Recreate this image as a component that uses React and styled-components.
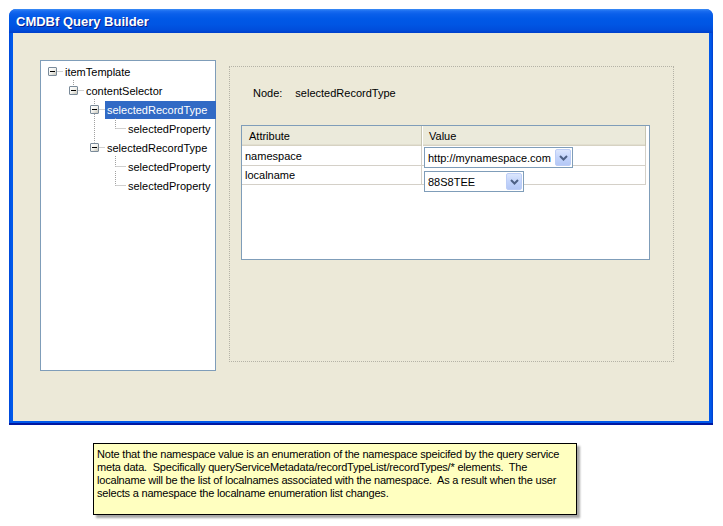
import React from "react";
import styled, { createGlobalStyle } from "styled-components";

const GlobalStyle = createGlobalStyle`
  html, body { margin: 0; padding: 0; background: #ffffff; }
  body { font-family: "Liberation Sans", Arial, sans-serif; font-size: 11px; color: #000; }
`;

const Page = styled.div`
  width: 723px;
  height: 526px;
  padding: 9px 0 0 9px;
  box-sizing: border-box;
`;

const Window = styled.div`
  width: 704px;
  height: 416px;
  display: flex;
  flex-direction: column;
  border-radius: 7px 7px 0 0;
  background: #0054e3;
  box-sizing: border-box;
  overflow: hidden;
`;

const TitleBar = styled.div`
  height: 24px;
  flex: none;
  display: flex;
  align-items: center;
  padding-left: 7px;
  background: linear-gradient(
    to bottom,
    #3d8df5 0px,
    #1a6cf0 2px,
    #0a5fea 5px,
    #0058e6 10px,
    #0055e3 16px,
    #004ddb 21px,
    #003fcb 24px
  );
  color: #fff;
  font-family: "Liberation Sans", Arial, sans-serif;
  font-weight: bold;
  font-size: 13px;
  text-shadow: 1px 1px 0 #0a1e8c;
`;

const Frame = styled.div`
  flex: 1;
  display: flex;
  padding: 0 4px 4px 4px;
  background: linear-gradient(to right, #0048d8, #0058ea 2px, #0058ea calc(100% - 2px), #003ccb);
  box-shadow: inset 0 -2px 0 #0018a0;
`;

const Body = styled.div`
  flex: 1;
  background: #ece9d8;
  display: flex;
  align-items: flex-start;
  padding: 27px 0 0 27px;
  gap: 13px;
`;

const TreePanel = styled.div`
  position: relative;
  width: 176px;
  height: 311px;
  box-sizing: border-box;
  background: #fff;
  border: 1px solid #7f9db9;
  padding-top: 1px;
`;

const Connectors = styled.svg`
  position: absolute;
  left: 0;
  top: 0;
  pointer-events: none;
`;

const TreeRow = styled.div`
  height: 19px;
  display: flex;
  align-items: center;
  padding-left: ${(p) => 22 + p.$level * 21}px;
  box-sizing: border-box;
`;

const Label = styled.span`
  display: inline-flex;
  align-items: center;
  height: 18px;
  padding: ${(p) => (p.$selected ? "0 9px 0 2px" : "0 2px")};
  white-space: nowrap;
  font-size: 11px;
  color: ${(p) => (p.$selected ? "#fff" : "#000")};
  background: ${(p) => (p.$selected ? "#316ac5" : "transparent")};
`;

const Expander = styled.div`
  position: absolute;
  width: 9px;
  height: 9px;
  box-sizing: border-box;
  border: 1px solid #7a8a99;
  border-radius: 1px;
  background: linear-gradient(135deg, #ffffff 0%, #f2f2ee 50%, #c8c5b8 100%);
  &::after {
    content: "";
    position: absolute;
    left: 1px;
    top: 3px;
    width: 5px;
    height: 1px;
    background: #000;
  }
`;

const ContentArea = styled.div`
  margin-top: 6px;
  width: 445px;
  height: 296px;
  box-sizing: border-box;
  border: 1px dotted #b4b2a6;
  padding: 15px 0 0 11px;
  display: flex;
  flex-direction: column;
`;

const NodeLine = styled.div`
  display: flex;
  gap: 13px;
  padding-left: 12px;
  height: 22px;
  align-items: center;
`;

const Table = styled.div`
  margin-top: 21px;
  width: 409px;
  height: 135px;
  box-sizing: border-box;
  border: 1px solid #7f9db9;
  background: #fff;
  padding-right: 3px;
`;

const HeaderRow = styled.div`
  display: grid;
  grid-template-columns: 180px 224px;
  height: 20px;
  background: #ebeadb;
  box-shadow: inset 0 -1px 0 #d6d2c2, inset 0 -2px 0 #e2dfd0;
`;

const HeaderCell = styled.div`
  display: flex;
  align-items: center;
  padding-left: ${(p) => p.$pad}px;
  border-right: 1px solid #c7c5b2;
  border-left: ${(p) => (p.$first ? "none" : "1px solid #fff")};
  box-sizing: border-box;
`;

const DataRow = styled.div`
  display: grid;
  grid-template-columns: 180px 224px;
  height: ${(p) => p.$h}px;
  box-sizing: border-box;
  border-bottom: 1px solid #d4d0c8;
`;

const Cell = styled.div`
  position: relative;
  display: flex;
  align-items: center;
  padding-left: 3px;
  border-right: 1px solid #d4d0c8;
  box-sizing: border-box;
`;

const Combo = styled.div`
  position: absolute;
  left: 2px;
  top: ${(p) => p.$top}px;
  width: ${(p) => p.$w}px;
  height: 21px;
  box-sizing: border-box;
  border: 1px solid #7f9db9;
  background: #fff;
  display: flex;
  align-items: center;
  justify-content: space-between;
  padding: 1px 1px 1px 3px;
  z-index: 1;
`;

const ComboText = styled.span`
  font-size: 11px;
  white-space: nowrap;
`;

const ComboButton = styled.div`
  width: 16px;
  height: 17px;
  border-radius: 2px;
  background: linear-gradient(to bottom, #dce7fd, #c3d4fb 50%, #b4c8f6);
  border: 1px solid #bccdf6;
  box-sizing: border-box;
  display: flex;
  align-items: center;
  justify-content: center;
`;

const Note = styled.div`
  margin: 18px 0 0 84px;
  width: 484px;
  height: 72px;
  box-sizing: border-box;
  background: #ffffc0;
  border: 1px solid #000;
  box-shadow: 3px 3px 2px rgba(0, 0, 0, 0.35);
  padding: 4px 3px 0 3px;
  font-size: 11px;
  line-height: 13px;
  letter-spacing: -0.2px;
`;

const NoteLine = styled.div`
  white-space: pre;
`;

const treeRows = [
  { label: "itemTemplate", level: 0, exp: true },
  { label: "contentSelector", level: 1, exp: true },
  { label: "selectedRecordType", level: 2, exp: true, selected: true },
  { label: "selectedProperty", level: 3 },
  { label: "selectedRecordType", level: 2, exp: true },
  { label: "selectedProperty", level: 3 },
  { label: "selectedProperty", level: 3 },
];

const noteLines = [
  "Note that the namespace value is an enumeration of the namespace speicifed by the query service",
  "meta data.  Specifically queryServiceMetadata/recordTypeList/recordTypes/* elements.  The",
  "localname will be the list of localnames associated with the namespace.  As a result when the user",
  "selects a namespace the localname enumeration list changes.",
];

const ROW_H = 19;
const TOP = 1;
const cy = (i) => TOP + i * ROW_H + 9.5;
const cx = (level) => 11 + level * 21;

function TreeLines() {
  const lines = [];
  const dot = { stroke: "#a0a0a0", strokeWidth: 1, strokeDasharray: "1 1" };
  treeRows.forEach((r, i) => {
    const x = cx(r.level) + 0.5;
    const y = Math.floor(cy(i)) + 0.5;
    const textX = 22 + r.level * 21;
    lines.push(
      <line key={"h" + i} x1={r.exp ? x + 5 : x} y1={y} x2={textX} y2={y} {...dot} />
    );
    if (i > 0) {
      let j = i - 1;
      while (j >= 0 && treeRows[j].level > r.level) j--;
      const startY =
        treeRows[j].level === r.level
          ? Math.floor(cy(j)) + 5
          : TOP + (j + 1) * ROW_H - 1;
      const endY = r.exp ? y - 5 : y;
      lines.push(
        <line key={"v" + i} x1={x} y1={startY} x2={x} y2={endY} {...dot} />
      );
    }
  });
  return (
    <Connectors width="174" height="309">
      {lines}
    </Connectors>
  );
}

function Chevron() {
  return (
    <svg width="9" height="6" viewBox="0 0 9 6">
      <path d="M1 1 L4.5 4.5 L8 1" fill="none" stroke="#4d6185" strokeWidth="2" />
    </svg>
  );
}

export default function App() {
  return (
    <>
      <GlobalStyle />
      <Page>
        <Window>
          <TitleBar>CMDBf Query Builder</TitleBar>
          <Frame>
            <Body>
              <TreePanel>
                <TreeLines />
                {treeRows.map((r, i) => (
                  <TreeRow key={i} $level={r.level}>
                    <Label $selected={r.selected}>{r.label}</Label>
                  </TreeRow>
                ))}
                {treeRows.map((r, i) =>
                  r.exp ? (
                    <Expander
                      key={"e" + i}
                      style={{ left: cx(r.level) - 4, top: Math.floor(cy(i)) - 4 }}
                    />
                  ) : null
                )}
              </TreePanel>
              <ContentArea>
                <NodeLine>
                  <span>Node:</span>
                  <span>selectedRecordType</span>
                </NodeLine>
                <Table>
                  <HeaderRow>
                    <HeaderCell $pad={7} $first>Attribute</HeaderCell>
                    <HeaderCell $pad={6}>Value</HeaderCell>
                  </HeaderRow>
                  <DataRow $h={20}>
                    <Cell>namespace</Cell>
                    <Cell>
                      <Combo $top={1} $w={149}>
                        <ComboText>http://mynamespace.com</ComboText>
                        <ComboButton>
                          <Chevron />
                        </ComboButton>
                      </Combo>
                    </Cell>
                  </DataRow>
                  <DataRow $h={19}>
                    <Cell>localname</Cell>
                    <Cell>
                      <Combo $top={5} $w={100}>
                        <ComboText>88S8TEE</ComboText>
                        <ComboButton>
                          <Chevron />
                        </ComboButton>
                      </Combo>
                    </Cell>
                  </DataRow>
                </Table>
              </ContentArea>
            </Body>
          </Frame>
        </Window>
        <Note>
          {noteLines.map((l, i) => (
            <NoteLine key={i}>{l}</NoteLine>
          ))}
        </Note>
      </Page>
    </>
  );
}
